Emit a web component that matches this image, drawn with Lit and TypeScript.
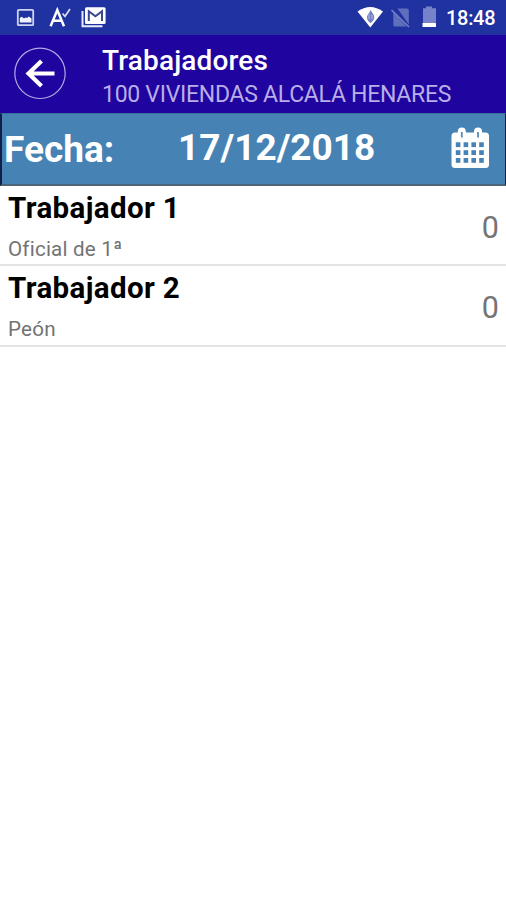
import { LitElement, html, css, svg } from "lit";
import { customElement, property, state } from "lit/decorators.js";

interface Worker {
  name: string;
  role: string;
  hours: number;
}

@customElement("status-bar")
class StatusBar extends LitElement {
  static styles = css`
    :host {
      display: flex;
      height: 35px;
      justify-content: space-between;
      background: #2032a0;
      color: #fff;
    }
    svg {
      display: block;
      flex: none;
    }
    .right {
      display: flex;
    }
    .time {
      width: 60px;
      font: 500 20px/36px Roboto, sans-serif;
      letter-spacing: -0.3px;
      white-space: nowrap;
    }
  `;
  render() {
    return html`
      <svg width="120" height="35" viewBox="0 0 120 35">
        <rect x="17.8" y="9.8" width="15.4" height="15.4" rx="1" fill="none" stroke="#cfd4f0" stroke-width="1.8"></rect>
        <path d="M19.800 22.500v-4.500l2-1.200 2.200 1.700 1.500-1 1.500.5 1.800-1.500 2.700 2v4z" fill="#f0f2fc"></path>
        <path d="M50.600 26.300 57.300 10 64 26.300M53.300 20.700H62" fill="none" stroke="#fff" stroke-width="2.500"></path>
        <path d="M62.500 13.500 65 16.300 70 9" fill="none" stroke="#d9ddf5" stroke-width="1.700"></path>
        <path d="M82.500 11v15.300h20" fill="none" stroke="#e8eafa" stroke-width="2"></path>
        <rect x="85" y="7.300" width="20.600" height="16.800" rx="1.500" fill="#fff"></rect>
        <path d="M88.800 21V11.300l6.600 4.900 6.600-4.900V21" fill="none" stroke="#38458f" stroke-width="2"></path>
      </svg>
      <div class="right">
        <svg width="90" height="35" viewBox="356 0 90 35">
          <path d="M357.500 11.500Q370.300 2.500 383 11.500L370.300 27.400z" fill="#fff"></path>
          <path d="M370.600 9.500c.6 3 4 4.500 3.600 8.200-.3 2.500-2 4-3.600 5.500-1.700-1.500-3.500-3-3.600-5.500 0-3.200 3-4.700 3.600-8.200z" fill="#7380c4"></path>
          <path d="M369 14.500v4.500M372 14.500v4.500" stroke="#b5bce4" stroke-width="1"></path>
          <path d="M397.500 8.500h9.500q1.800 0 1.800 1.800v14.200zM393.300 12.500 406.500 26.500H395q-1.700 0-1.700-1.700z" fill="#606fbd"></path>
          <path d="M391.500 10 409 27" stroke="#7884c9" stroke-width="1.600"></path>
          <path d="M423 8.300h3V6.500h6v1.800h4v14.200h-13z" fill="#7682c9"></path>
          <rect x="422.500" y="22.800" width="13.500" height="4.300" rx=".6" fill="#fff"></rect>
        </svg>
        <div class="time">18:48</div>
      </div>
    `;
  }
}

@customElement("worker-row")
class WorkerRow extends LitElement {
  @property({ attribute: false }) worker!: Worker;
  static styles = css`
    :host {
      display: flex;
      box-sizing: border-box;
      height: 80.3px;
      padding: 0 7px 0 8px;
      justify-content: space-between;
      border-bottom: 2px solid #e4e4e4;
      font-family: Roboto, sans-serif;
      white-space: nowrap;
    }
    .name {
      color: #000;
      font-size: 29.5px;
      font-weight: 700;
      letter-spacing: 0.38px;
      line-height: 44px;
    }
    .role {
      color: #737373;
      font-size: 20.6px;
      letter-spacing: 0.2px;
      line-height: 38px;
    }
    .hours {
      color: #747474;
      font-size: 30.5px;
      line-height: 83px;
    }
  `;
  render() {
    return html`
      <div>
        <div class="name">${this.worker.name}</div>
        <div class="role">${this.worker.role}</div>
      </div>
      <div class="hours">${this.worker.hours}</div>
    `;
  }
}

@customElement("app-root")
class AppRoot extends LitElement {
  @state() private workers: Worker[] = [
    { name: "Trabajador 1", role: "Oficial de 1ª", hours: 0 },
    { name: "Trabajador 2", role: "Peón", hours: 0 },
  ];
  static styles = css`
    :host {
      display: block;
      height: 900px;
      overflow: hidden;
      background: #fff;
      font-family: Roboto, sans-serif;
      white-space: nowrap;
    }
    header {
      display: flex;
      height: 78px;
      background: #1f049f;
    }
    svg {
      display: block;
      flex: none;
    }
    .title {
      color: #fff;
      font-size: 28px;
      font-weight: 500;
      letter-spacing: 0.15px;
      line-height: 34px;
      padding-top: 9px;
    }
    .site {
      color: #b9aee8;
      font-size: 23px;
      letter-spacing: -0.28px;
      line-height: 34px;
    }
    .date-bar {
      display: flex;
      box-sizing: border-box;
      height: 73px;
      border: 1px solid #28577f;
      border-color: #356f9b #10204a #4d6579;
      border-width: 1px 1px 2px 2px;
      background: #4682b4;
      color: #fff;
      font-size: 37px;
      font-weight: 700;
      line-height: 67px;
    }
    .label {
      width: 176px;
      padding-left: 2px;
      box-sizing: border-box;
      line-height: 71px;
    }
    .date {
      flex: 1;
    }
  `;
  render() {
    return html`
      <status-bar></status-bar>
      <header>
        <svg width="102" height="78" viewBox="0 0 102 78">
          <circle cx="40" cy="38.300" r="25.200" fill="none" stroke="#b5a9e6" stroke-width="1.200"></circle>
          <path d="M54.500 38.500H29M41.500 26 28.500 38.500 41.500 51" fill="none" stroke="#fff" stroke-width="4.200"></path>
        </svg>
        <div>
          <div class="title">Trabajadores</div>
          <div class="site">100 VIVIENDAS ALCALÁ HENARES</div>
        </div>
      </header>
      <div class="date-bar">
        <div class="label">Fecha:</div>
        <div class="date">17/12/2018</div>
        <svg width="55" height="69" viewBox="450 114 55 69">
          <rect x="451.500" y="132.500" width="37.500" height="35.500" rx="3.500" fill="#fff"></rect>
          <rect x="457.800" y="127.500" width="8" height="12" rx="4" fill="#fff"></rect>
          <rect x="474" y="127.500" width="8" height="12" rx="4" fill="#fff"></rect>
          <path d="M461.800 132v5.500M478 132v5.500" stroke="#5a8cb8" stroke-width="1.800"></path>
          ${[142.3, 150.2, 158].map((y) =>
            [455.8, 463.6, 471.4, 479.2].map(
              (x) => svg`<rect x=${x} y=${y} width="4.6" height="4.8" fill="#4682b4"></rect>`
            )
          )}
        </svg>
      </div>
      ${this.workers.map((w) => html`<worker-row .worker=${w}></worker-row>`)}
    `;
  }
}
